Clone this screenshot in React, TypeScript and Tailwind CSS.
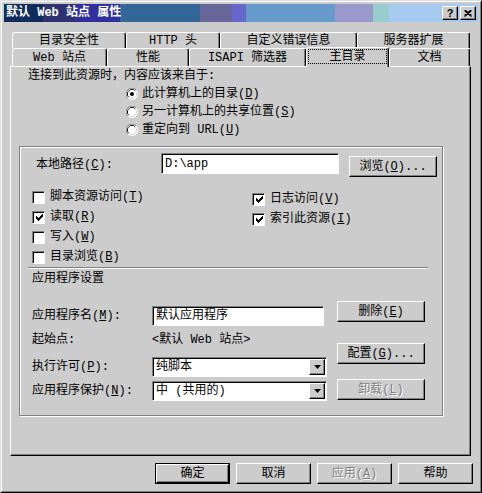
import React from "react";

const raised =
  "border border-t-white border-l-white border-r-black border-b-black shadow-[inset_-1px_-1px_0_#808080]";
const sunken =
  "border border-t-[#808080] border-l-[#808080] border-r-white border-b-white shadow-[inset_1px_1px_0_#000]";
const disabledText = "text-[#808080] [text-shadow:1px_1px_0_#fff]";

function Key({ k }: { k: string }) {
  return (
    <span>
      (<u className="underline-offset-1">{k}</u>)
    </span>
  );
}

function Radio({ checked }: { checked?: boolean }) {
  return (
    <svg width="12" height="12" viewBox="0 0 12 12">
      <circle cx="6" cy="6" r="6" fill="#fff" />
      <path d="M1.8 10.2 A5.5 5.5 0 0 1 10.2 1.8" stroke="#808080" fill="none" />
      <circle cx="6" cy="6" r="4.5" fill="none" stroke="#cccccc" />
      <path d="M2.8 9.2 A4.5 4.5 0 0 1 9.2 2.8" stroke="#000" fill="none" />
      <circle cx="6" cy="6" r="4" fill="#fff" />
      {checked && <circle cx="6" cy="6" r="2" fill="#000" />}
    </svg>
  );
}

const checkCols = [2, 3, 4, 3, 2, 1, 0];

function Check({ checked, label }: { checked?: boolean; label: React.ReactNode }) {
  return (
    <div className="flex items-center h-[20px] gap-[5px]">
      <div className={`w-[13px] h-[13px] bg-white ${sunken} flex items-center justify-center`}>
        {checked && (
          <svg width="7" height="7" viewBox="0 0 7 7" className="ml-[1px] mt-[1px]">
            {checkCols.map((y, x) => (
              <rect key={x} x={x} y={y} width="1" height="3" fill="#000" />
            ))}
          </svg>
        )}
      </div>
      <span>{label}</span>
    </div>
  );
}

function Btn({
  children,
  disabled,
  className = "",
}: {
  children: React.ReactNode;
  disabled?: boolean;
  className?: string;
}) {
  return (
    <div
      className={`flex items-center justify-center h-[21px] bg-[#cccccc] ${raised} ${className} ${
        disabled ? disabledText : ""
      }`}
    >
      {children}
    </div>
  );
}

function Select({ value }: { value: string }) {
  return (
    <div className={`w-[175px] h-[20px] bg-white flex items-center ${sunken}`}>
      <span className="flex-1 pl-[3px] whitespace-pre">{value}</span>
      <div className={`w-[16px] h-[16px] mr-[1px] bg-[#cccccc] flex items-center justify-center ${raised}`}>
        <svg width="7" height="4" viewBox="0 0 7 4">
          <path d="M0 0h7L3.5 4z" fill="#000" />
        </svg>
      </div>
    </div>
  );
}

const row1 = [
  { label: "目录安全性", w: "w-[114px]" },
  { label: "HTTP 头", w: "w-[94px]" },
  { label: "自定义错误信息", w: "w-[137px]" },
  { label: "服务器扩展", w: "w-[113px]" },
];

const row2 = [
  { label: "Web 站点", w: "w-[95px]" },
  { label: "性能", w: "w-[82px]" },
  { label: "ISAPI 筛选器", w: "w-[117px]" },
  { label: "主目录", w: "w-[83px]", selected: true },
  { label: "文档", w: "w-[81px]" },
];

const tabBase =
  "flex items-center justify-center bg-[#cccccc] border-t border-l border-r border-t-white border-l-white border-r-black rounded-t-[3px] shadow-[inset_-1px_0_0_#808080]";

function Tab({ label, w, selected }: { label: string; w: string; selected?: boolean }) {
  if (selected) {
    return (
      <div className={`${w} ${tabBase} relative z-10 -mt-[1px] h-[20px] px-[1px] pt-[1px] pb-[3px]`}>
        <div className="w-full h-full border border-dotted border-black flex items-center justify-center">
          {label}
        </div>
      </div>
    );
  }
  return <div className={`${w} ${tabBase} h-full`}>{label}</div>;
}

export default function App() {
  return (
    <div className="w-[482px] h-[493px] bg-[#cccccc] text-black text-[12px] leading-[14px] font-['Liberation_Mono','Noto_Sans_CJK_SC',monospace] border border-t-[#dfdfdf] border-l-[#dfdfdf] border-r-black border-b-black">
      <div className="h-full border border-t-white border-l-white border-r-[#808080] border-b-[#808080] p-[2px] flex flex-col">
        {/* Title bar */}
        <div className="h-[18px] flex items-center pl-[2px] pr-[2px] bg-[linear-gradient(90deg,#0f2c5d_39px,#2f3270_39px,#2f3270_71px,#302f9c_71px,#302f9c_116px,#336699_116px,#336699_196px,#666699_196px,#666699_228px,#6666cc_228px,#6666cc_242px,#6699cc_242px,#6699cc_331px,#9999cc_331px,#9999cc_369px,#99cccc_369px,#99cccc_385px,#a6caf0_385px)]">
          <span className="flex-1 text-white font-bold">默认 Web 站点 属性</span>
          <div className="flex gap-[2px]">
            <div className={`w-[16px] h-[14px] bg-[#cccccc] flex items-center justify-center font-bold text-[11px] font-['Liberation_Sans',sans-serif] ${raised}`}>
              ?
            </div>
            <div className={`w-[16px] h-[14px] bg-[#cccccc] flex items-center justify-center ${raised}`}>
              <svg width="8" height="7" viewBox="0 0 8 7">
                <path d="M0.5 0.5L7.5 6.5M1.5 0.5L7.5 5.5M7.5 0.5L0.5 6.5M6.5 0.5L0.5 5.5" stroke="#000" strokeWidth="1.2" />
              </svg>
            </div>
          </div>
        </div>

        {/* Tabs */}
        <div className="mt-[10px] ml-[8px] flex h-[16px]">
          {row1.map((t) => (
            <Tab key={t.label} label={t.label} w={t.w} />
          ))}
        </div>
        <div className="ml-[8px] flex items-start h-[18px]">
          {row2.map((t) => (
            <Tab key={t.label} label={t.label} w={t.w} selected={t.selected} />
          ))}
        </div>

        {/* Panel */}
        <div className="ml-[6px] w-[461px] h-[390px] border border-t-white border-l-white border-r-black border-b-black shadow-[inset_-1px_-1px_0_#808080]">
          <div className="pl-[17px] pt-[2px]">连接到此资源时，内容应该来自于:</div>
          <div className="mt-[2px]">
            <div className="flex items-center h-[18px] pl-[115px] gap-[4px]">
              <Radio checked />
              <span>
                此计算机上的目录<Key k="D" />
              </span>
            </div>
            <div className="flex items-center h-[18px] pl-[115px] gap-[4px]">
              <Radio />
              <span>
                另一计算机上的共享位置<Key k="S" />
              </span>
            </div>
            <div className="flex items-center h-[18px] pl-[115px] gap-[4px]">
              <Radio />
              <span>
                重定向到 URL<Key k="U" />
              </span>
            </div>
          </div>

          {/* Group box */}
          <div className="ml-[8px] mt-[7px] w-[424px] h-[270px] border border-[#808080] shadow-[inset_1px_1px_0_#fff,1px_1px_0_#fff]">
            <div className="mt-[6px] flex h-[24px] pl-[16px]">
              <span className="w-[125px] self-center">
                本地路径<Key k="C" />:
              </span>
              <div className={`w-[178px] h-[21px] bg-white flex items-center pl-[3px] ${sunken}`}>
                {"D:\\app"}
              </div>
              <Btn className="w-[88px] ml-[10px] self-end">
                浏览<Key k="O" />...
              </Btn>
            </div>

            <div className="mt-[10px] flex">
              <div className="pl-[12px] w-[232px]">
                <Check label={<>脚本资源访问<Key k="T" /></>} />
                <Check checked label={<>读取<Key k="R" /></>} />
                <Check label={<>写入<Key k="W" /></>} />
                <Check label={<>目录浏览<Key k="B" /></>} />
              </div>
              <div className="pt-[2px]">
                <Check checked label={<>日志访问<Key k="V" /></>} />
                <Check checked label={<>索引此资源<Key k="I" /></>} />
              </div>
            </div>

            <div className="ml-[8px] w-[400px] h-[2px] border-t border-t-[#808080] border-b border-b-white" />
            <div className="pl-[12px] mt-[3px]">应用程序设置</div>

            <div className="flex pl-[12px]">
              <div className="w-[295px]">
                <div className="mt-[20px] flex items-center h-[20px]">
                  <span className="w-[120px]">
                    应用程序名<Key k="M" />:
                  </span>
                  <div className={`w-[172px] h-[20px] bg-white flex items-center pl-[3px] ${sunken}`}>
                    默认应用程序
                  </div>
                </div>
                <div className="mt-[4px] flex items-center h-[20px]">
                  <span className="w-[120px]">起始点:</span>
                  <span>&lt;默认 Web 站点&gt;</span>
                </div>
                <div className="mt-[7px] flex items-center h-[20px]">
                  <span className="w-[120px]">
                    执行许可<Key k="P" />:
                  </span>
                  <Select value="纯脚本" />
                </div>
                <div className="mt-[4px] flex items-center h-[20px]">
                  <span className="w-[120px]">
                    应用程序保护<Key k="N" />:
                  </span>
                  <Select value="中 (共用的)" />
                </div>
              </div>
              <div className="ml-[10px] flex flex-col">
                <Btn className="w-[88px] mt-[15px]">
                  删除<Key k="E" />
                </Btn>
                <Btn className="w-[88px] mt-[21px]">
                  配置<Key k="G" />...
                </Btn>
                <Btn disabled className="w-[88px] mt-[15px]">
                  卸载<Key k="L" />
                </Btn>
              </div>
            </div>
          </div>
        </div>

        {/* Dialog buttons */}
        <div className="mt-[7px] pr-[5px] flex justify-end gap-[6px]">
          <div className="w-[75px] h-[21px] border border-black">
            <Btn className="w-full h-full">确定</Btn>
          </div>
          <Btn className="w-[75px]">取消</Btn>
          <Btn disabled className="w-[75px]">
            应用<Key k="A" />
          </Btn>
          <Btn className="w-[75px]">帮助</Btn>
        </div>
      </div>
    </div>
  );
}
